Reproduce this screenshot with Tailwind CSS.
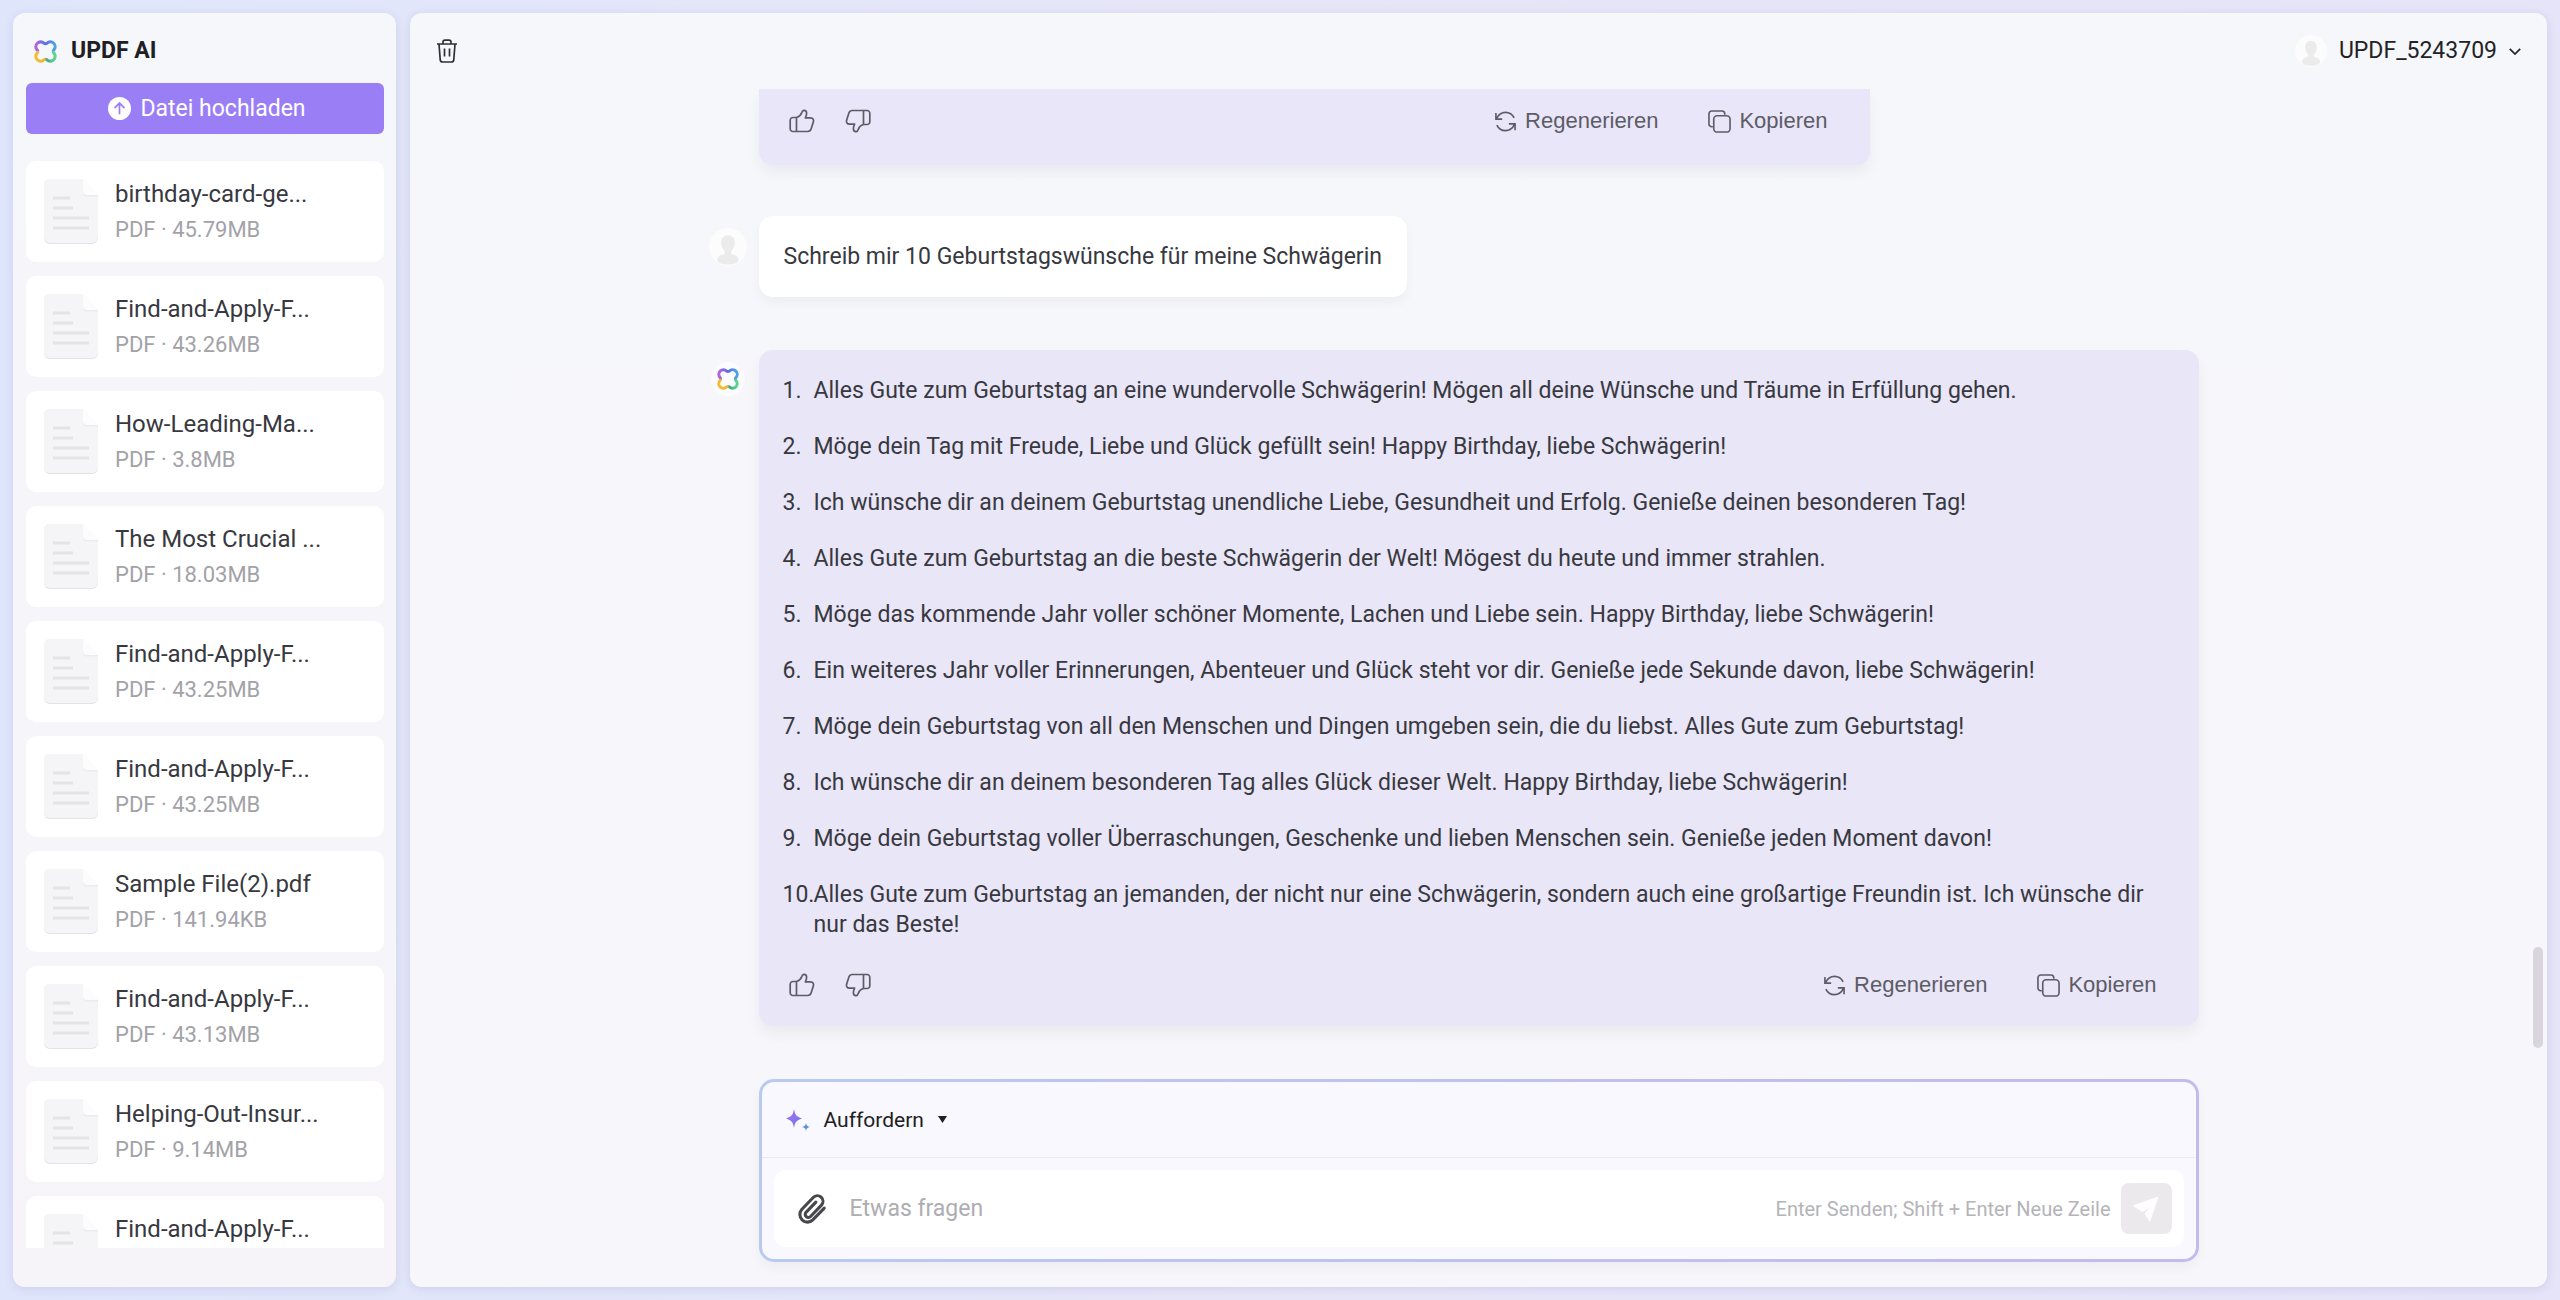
<!DOCTYPE html>
<html lang="de">
<head>
<meta charset="utf-8">
<meta name="viewport" content="width=device-width, initial-scale=1">
<title>UPDF AI</title>
<script src="https://cdn.jsdelivr.net/npm/@tailwindcss/browser@4"></script>
</head>
<body class="flex h-screen gap-[14px] overflow-hidden bg-linear-to-r from-[#dfe6fb] via-[#e7e6f8] to-[#e5e4f8] p-[13px] font-[Roboto,sans-serif] text-[23px] leading-[30px] text-[#38383f]">

<svg class="absolute size-0" aria-hidden="true">
  <defs>
    <linearGradient id="g-top" gradientUnits="userSpaceOnUse" x1="2" y1="0" x2="22" y2="0"><stop offset="0" stop-color="#b365e0"/><stop offset=".5" stop-color="#5d6fe0"/><stop offset="1" stop-color="#4aa5e8"/></linearGradient>
    <linearGradient id="g-bottom" gradientUnits="userSpaceOnUse" x1="2" y1="0" x2="22" y2="0"><stop offset="0" stop-color="#f3bd2f"/><stop offset=".48" stop-color="#e6b93a"/><stop offset=".56" stop-color="#3fa88a"/><stop offset="1" stop-color="#5fd68c"/></linearGradient>
    <linearGradient id="g-spark" x1="0" y1="0" x2="1" y2="1"><stop offset="0" stop-color="#a96df0"/><stop offset="1" stop-color="#6a7ae8"/></linearGradient>
  </defs>
  <symbol id="logo" viewBox="0 0 24 24">
    <path d="M3.900 12q0-.8-.5-1.500A4.900 4.900 0 1 1 10.500 3.400q1.500 1 3 0A4.900 4.900 0 1 1 20.600 10.500q-.5.7-.5 1.500" fill="none" stroke="url(#g-top)" stroke-width="3.200"/>
    <path d="M3.900 12q0 .8-.5 1.500A4.900 4.900 0 1 0 10.500 20.600q1.500-1 3 0A4.900 4.900 0 1 0 20.600 13.500q-.5-.7-.5-1.500" fill="none" stroke="url(#g-bottom)" stroke-width="3.200"/>
  </symbol>
  <symbol id="doc" viewBox="0 0 56 66">
    <path d="M6 1h34l15 16v42a6 6 0 0 1-6 6H7a6 6 0 0 1-6-6V6a5 5 0 0 1 5-5z" fill="#e3e2e6"/>
    <path d="M6 0h34l15 16v42a6 6 0 0 1-6 6H7a6 6 0 0 1-6-6V5a5 5 0 0 1 5-5z" fill="#f5f4f6"/>
    <path d="M40 0v12a4 4 0 0 0 4 4h11z" fill="#fcfcfd"/><path d="M40 12a4 4 0 0 0 4 4h11v1.500H43a4 4 0 0 1-3-4z" fill="#ececef"/>
    <path d="M10 19h17M10 29h20M10 39h36M10 49h36" stroke="#e4e3e7" stroke-width="3"/>
  </symbol>
  <symbol id="person" viewBox="0 0 32 32">
    <circle cx="16" cy="16" r="16" fill="#fcfcfc"/>
    <path d="M16 6c3.800 0 5.800 2.600 5.800 6.200 0 3.200-1.400 5.800-3 7.200v2.400c3 1 6.200 1.400 6.200 5.200 0 2.400-4 3.800-9 3.800s-9-1.400-9-3.800c0-3.800 3.200-4.200 6.200-5.200v-2.400c-1.600-1.400-3-4-3-7.200C10.200 8.600 12.200 6 16 6z" fill="#ebebeb"/>
  </symbol>
  <symbol id="thumb" viewBox="0 0 26 24">
    <path d="M7.500 8.500H4A2.700 2.700 0 0 0 1.200 11.200v8.600A2.700 2.700 0 0 0 4 22.500h14.800c1.600 0 2.800-.9 3.300-2.400l2.300-7.400c.6-2-.6-3.800-2.800-3.800h-5.200c.9-2 1.400-3.600 1.200-5-.2-1.600-1.400-2.600-2.800-2.500-1.200.1-1.600.9-2 2.200-.8 2.400-2.600 4.200-5.300 4.900zM7.500 8.500v14" fill="none" stroke="currentColor" stroke-width="1.700" stroke-linejoin="round"/>
  </symbol>
  <symbol id="regen" viewBox="0 0 24 24">
    <path d="M2 3v6.500h6.500M2.600 9C4.800 4.500 8.200 2.500 12 2.500c4 0 7.300 2.200 9 5.800M22 21v-6.500h-6.500M21.400 15c-2.200 4.500-5.600 6.500-9.400 6.500-4 0-7.300-2.200-9-5.800" fill="none" stroke="currentColor" stroke-width="1.700"/>
  </symbol>
  <symbol id="copy" viewBox="0 0 24 24">
    <path d="M5 17.500H4A3 3 0 0 1 1 14.500V4a3 3 0 0 1 3-3h10.500a3 3 0 0 1 3 3v1" fill="none" stroke="currentColor" stroke-width="1.700"/>
    <rect x="6" y="6" width="17" height="17" rx="3.500" fill="none" stroke="currentColor" stroke-width="1.700"/>
  </symbol>
</svg>

<aside class="flex w-[383px] shrink-0 flex-col rounded-xl bg-linear-to-b from-[#f6f7fb] to-[#f6f4f8] px-3 pl-[13px] pb-[39px] shadow-[0_2px_10px_rgba(90,80,150,0.14)]">
  <div class="flex h-[70px] shrink-0 items-center gap-[14px] px-2 pt-[6px]">
    <svg class="size-[23px]"><use href="#logo"/></svg>
    <h1 class="text-[23px] font-bold text-[#202024]">UPDF AI</h1>
  </div>
  <button class="flex h-[51px] shrink-0 items-center justify-center gap-[9px] rounded-md bg-[#9a7ef5] pl-1 text-white">
    <svg class="size-[23px]" viewBox="0 0 24 24"><circle cx="12" cy="12" r="12" fill="#fff"/><path d="M12 18V6.500M6.800 11.500 12 6.300l5.200 5.200" fill="none" stroke="#9a7ef5" stroke-width="1.800"/></svg>
    Datei hochladen
  </button>
  <ul id="files" class="mt-[27px] flex min-h-0 flex-1 flex-col gap-[14px] overflow-hidden"></ul>
</aside>

<main class="relative flex min-w-0 flex-1 flex-col rounded-xl bg-linear-to-b from-[#f6f7fb] to-[#f7f6fb] shadow-[0_2px_10px_rgba(90,80,150,0.14)]">
  <header class="flex h-[76px] shrink-0 items-center justify-between px-[26px]">
    <button aria-label="Löschen" class="text-[#2f2f36]">
      <svg class="h-6 w-[22px]" viewBox="0 0 22 24" fill="none" stroke="currentColor" stroke-width="1.700"><path d="M1 5h20M7 5V3.200C7 2 7.800 1.200 9 1.200h4c1.200 0 2 .8 2 2V5M3 5l1.200 15.500A2.500 2.500 0 0 0 6.700 23h8.600a2.500 2.500 0 0 0 2.500-2.500L19 5M8.500 9.500v8M13.500 9.500v8"/></svg>
    </button>
    <button class="flex items-center gap-3 text-[#222226]">
      <svg class="size-8"><use href="#person"/></svg>
      UPDF_5243709
      <svg class="h-[7px] w-3" viewBox="0 0 12 7" fill="none" stroke="currentColor" stroke-width="1.700"><path d="M.8.8 6 6 11.200.8"/></svg>
    </button>
  </header>

  <div class="min-h-0 flex-1 overflow-hidden">
    <div class="mx-auto grid max-w-[1540px] grid-cols-[38px_minmax(0,1fr)_38px] gap-x-3">
      <article class="col-start-2 mb-[51px] flex h-[76px] w-[1111px] max-w-full items-start justify-between rounded-b-[14px] bg-[#e8e6f8] pt-[17px] pr-[42px] pl-[30px] font-['Liberation_Sans',sans-serif] text-[22px] text-[#5d5c66] shadow-[0_8px_14px_rgba(0,0,0,0.05)]">
        <div class="flex h-[30px] items-center gap-[30px]">
          <button aria-label="Gefällt mir"><svg class="h-6 w-[26px]"><use href="#thumb"/></svg></button>
          <button aria-label="Gefällt mir nicht"><svg class="h-6 w-[26px] rotate-180"><use href="#thumb"/></svg></button>
        </div>
        <div class="flex items-center gap-[50px]">
          <button class="flex items-center gap-2"><svg class="size-[23px]"><use href="#regen"/></svg>Regenerieren</button>
          <button class="flex items-center gap-2"><svg class="size-[23px]"><use href="#copy"/></svg>Kopieren</button>
        </div>
      </article>

      <svg class="col-start-1 mt-3 size-[38px]"><use href="#person"/></svg>
      <p class="mb-[53px] justify-self-start rounded-[14px] bg-white px-[25px] pt-[26px] pb-[25px] shadow-[0_6px_12px_rgba(0,0,0,0.04)]">Schreib mir 10 Geburtstagswünsche für meine Schwägerin</p>

      <span class="col-start-1 mt-3 flex size-[34px] items-center justify-center justify-self-center rounded-full bg-[#fcfcfe]"><svg class="size-[22px]"><use href="#logo"/></svg></span>
      <article class="rounded-[14px] bg-[#e8e6f7] pt-[26px] pb-[26px] shadow-[0_8px_14px_rgba(0,0,0,0.05)]">
        <ol id="wishes" class="flex flex-col gap-[26px] px-6"></ol>
        <div class="mt-[30px] flex items-center justify-between pr-[42px] pl-[30px] font-['Liberation_Sans',sans-serif] text-[22px] text-[#5d5c66]">
          <div class="flex items-center gap-[30px]">
            <button aria-label="Gefällt mir"><svg class="h-6 w-[26px]"><use href="#thumb"/></svg></button>
            <button aria-label="Gefällt mir nicht"><svg class="h-6 w-[26px] rotate-180"><use href="#thumb"/></svg></button>
          </div>
          <div class="flex items-center gap-[50px]">
            <button class="flex items-center gap-2"><svg class="size-[23px]"><use href="#regen"/></svg>Regenerieren</button>
            <button class="flex items-center gap-2"><svg class="size-[23px]"><use href="#copy"/></svg>Kopieren</button>
          </div>
        </div>
      </article>
    </div>
  </div>

  <div class="mx-auto mb-[25px] w-full max-w-[1440px] shrink-0 rounded-[15px] bg-linear-to-r from-[#b9caf1] to-[#c4baee] p-[3px] shadow-[0_6px_12px_rgba(0,0,0,0.04)]">
    <form class="rounded-xl bg-[#f9f8fe]">
      <div class="flex h-[76px] items-center border-b border-[#ebeaf2] px-6">
        <button type="button" class="flex items-center gap-[14px] text-[21px] text-[#202024]">
          <svg class="h-[22px] w-6" viewBox="0 0 24 22"><path d="M8 0c1 6 2.500 7.700 8 9.500-5.500 1.800-7 3.500-8 9.500-1-6-2.500-7.700-8-9.500C5.500 7.700 7 6 8 0z" fill="url(#g-spark)"/><path d="M20 14c.5 2.600 1.300 3.400 4 4-2.700.6-3.500 1.400-4 4-.5-2.600-1.300-3.400-4-4 2.700-.6 3.500-1.400 4-4z" fill="#5b8fe0"/></svg>
          Auffordern
          <svg class="h-[7px] w-[9px]" viewBox="0 0 9 7"><path d="M0 0h9L4.500 7z" fill="currentColor"/></svg>
        </button>
      </div>
      <div class="p-3">
        <div class="flex h-[77px] items-center gap-[10px] rounded-xl bg-white pr-3 pl-[22px]">
          <button type="button" aria-label="Datei anhängen" class="text-[#48484c]"><svg class="size-[32px]" viewBox="0 0 24 24" fill="none" stroke="currentColor" stroke-width="2.300" stroke-linecap="round"><path d="m21.200 11.300-8.600 8.900a5.700 5.700 0 0 1-8.300-7.800l8.600-9a4.200 4.200 0 0 1 6.200 5.700l-8.200 8.500a2.300 2.300 0 0 1-3.400-3.100l7.400-7.700"/></svg></button>
          <input type="text" aria-label="Etwas fragen" placeholder="Etwas fragen" class="ml-3 min-w-0 flex-1 bg-transparent outline-none placeholder:text-[#adadb2]">
          <span class="text-[20px] text-[#b4b4b9]">Enter Senden; Shift + Enter Neue Zeile</span>
          <button type="submit" aria-label="Senden" class="flex size-[51px] items-center justify-center rounded-lg bg-[#ebe9eb]"><svg class="size-[26px]" viewBox="0 0 26 26" fill="#fff"><path d="M25.500.5 17.500 25c-.3.900-1 .9-1.500.1l-4.500-7.500 5.300-6.300-7 4.800L.8 10.500c-.8-.5-.7-1.200.2-1.400z"/></svg></button>
        </div>
      </div>
    </form>
  </div>

  <div class="absolute top-[934px] right-1 h-[101px] w-[10px] rounded-full bg-[#d8d6dc]"></div>
</main>

<script>
const files = [
  ['birthday-card-ge...', '45.79MB'], ['Find-and-Apply-F...', '43.26MB'], ['How-Leading-Ma...', '3.8MB'],
  ['The Most Crucial ...', '18.03MB'], ['Find-and-Apply-F...', '43.25MB'], ['Find-and-Apply-F...', '43.25MB'],
  ['Sample File(2).pdf', '141.94KB'], ['Find-and-Apply-F...', '43.13MB'], ['Helping-Out-Insur...', '9.14MB'],
  ['Find-and-Apply-F...', '']
];
document.getElementById('files').innerHTML = files.map(([name, size]) => `
  <li class="flex h-[101px] shrink-0 items-center gap-4 rounded-[10px] bg-white px-[17px]">
    <svg class="h-[66px] w-14"><use href="#doc"/></svg>
    <div>
      <p class="text-[24px] leading-9">${name}</p>
      <p class="h-9 text-[22px] leading-9 text-[#a3a2a8]">${size && 'PDF · ' + size}</p>
    </div>
  </li>`).join('');

const wishes = [
  'Alles Gute zum Geburtstag an eine wundervolle Schwägerin! Mögen all deine Wünsche und Träume in Erfüllung gehen.',
  'Möge dein Tag mit Freude, Liebe und Glück gefüllt sein! Happy Birthday, liebe Schwägerin!',
  'Ich wünsche dir an deinem Geburtstag unendliche Liebe, Gesundheit und Erfolg. Genieße deinen besonderen Tag!',
  'Alles Gute zum Geburtstag an die beste Schwägerin der Welt! Mögest du heute und immer strahlen.',
  'Möge das kommende Jahr voller schöner Momente, Lachen und Liebe sein. Happy Birthday, liebe Schwägerin!',
  'Ein weiteres Jahr voller Erinnerungen, Abenteuer und Glück steht vor dir. Genieße jede Sekunde davon, liebe Schwägerin!',
  'Möge dein Geburtstag von all den Menschen und Dingen umgeben sein, die du liebst. Alles Gute zum Geburtstag!',
  'Ich wünsche dir an deinem besonderen Tag alles Glück dieser Welt. Happy Birthday, liebe Schwägerin!',
  'Möge dein Geburtstag voller Überraschungen, Geschenke und lieben Menschen sein. Genieße jeden Moment davon!',
  'Alles Gute zum Geburtstag an jemanden, der nicht nur eine Schwägerin, sondern auch eine großartige Freundin ist. Ich wünsche dir nur das Beste!'
];
document.getElementById('wishes').innerHTML = wishes.map((text, i) =>
  `<li class="flex"><span class="w-[31px] shrink-0">${i + 1}.</span><span>${text}</span></li>`).join('');
</script>
</body>
</html>
